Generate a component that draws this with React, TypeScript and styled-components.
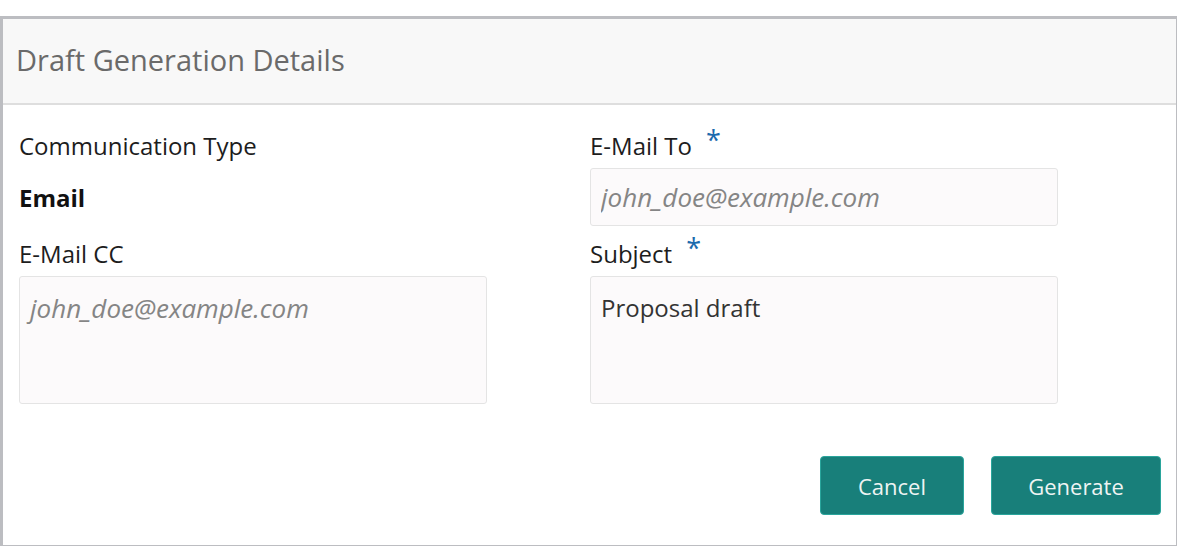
import styled, { createGlobalStyle } from "styled-components"

const Global = createGlobalStyle`
  html, body {
    margin: 0;
    padding: 0;
    background: #fff;
  }
  body {
    font-family: "Open Sans", "Noto Sans", sans-serif;
    color: #1d1d1d;
  }
`

const Page = styled.div`
  padding-top: 16px;
  width: 1178px;
  box-sizing: border-box;
`

const Panel = styled.section`
  box-sizing: border-box;
  width: 1177px;
  height: 530px;
  border-top: 3px solid #bcbdc1;
  border-left: 3px solid #bcbdc1;
  border-right: 1px solid #bcbdc1;
  border-bottom: 1px solid #bcbdc1;
  display: flex;
  flex-direction: column;
`

const Header = styled.header`
  height: 86px;
  box-sizing: border-box;
  background: #f8f8f8;
  border-bottom: 2px solid #dedede;
  display: flex;
  align-items: center;
  padding: 0 0 4px 13px;
`

const Title = styled.h2`
  margin: 0;
  font-size: 29px;
  font-weight: 400;
  color: #6a6a6a;
`

const Body = styled.div`
  padding: 26px 15px 0 16px;
  display: grid;
  grid-template-columns: 468px 468px;
  column-gap: 103px;
  row-gap: 13px;
`

const Field = styled.div`
  display: flex;
  flex-direction: column;
`

const Label = styled.label`
  font-size: 24px;
  line-height: 30px;
  height: 30px;
  margin-bottom: 7px;
  color: #1d1d1d;
`

const Required = styled.span`
  color: #1b6aad;
  font-size: 27px;
  line-height: 0;
  margin-left: 14px;
  position: relative;
  top: -5px;
`

const Value = styled.div`
  height: 58px;
  display: flex;
  align-items: center;
  font-size: 24px;
  font-weight: 700;
  color: #111;
`

const Input = styled.input`
  box-sizing: border-box;
  height: 58px;
  width: 100%;
  border: 1px solid #e4e4e4;
  border-radius: 3px;
  background: #fcfafb;
  padding: 0 10px;
  font-family: inherit;
  font-size: 24px;
  color: #333;
  outline: none;

  &::placeholder {
    font-style: italic;
    font-size: 26px;
    color: #858585;
  }
`

const TextArea = styled.textarea`
  box-sizing: border-box;
  height: 128px;
  width: 100%;
  resize: none;
  border: 1px solid #e4e4e4;
  border-radius: 3px;
  background: #fcfafb;
  padding: 16px 10px;
  font-family: inherit;
  font-size: 24px;
  line-height: 30px;
  color: #333;
  outline: none;

  &::placeholder {
    font-style: italic;
    font-size: 26px;
    color: #858585;
  }
`

const Footer = styled.div`
  display: flex;
  justify-content: flex-end;
  gap: 27px;
  padding: 52px 15px 0 0;
`

const Button = styled.button<{ $w: number }>`
  width: ${p => p.$w}px;
  height: 59px;
  box-sizing: border-box;
  border: 1px solid #2aa59c;
  border-radius: 4px;
  background: #187f7a;
  color: #eef4f3;
  font-family: inherit;
  font-size: 22px;
  cursor: pointer;
`

export default function App() {
  return <Page>
    <Global />
    <Panel>
      <Header>
        <Title>Draft Generation Details</Title>
      </Header>
      <Body>
        <Field>
          <Label>Communication Type</Label>
          <Value>Email</Value>
        </Field>
        <Field>
          <Label>E-Mail To<Required>*</Required></Label>
          <Input placeholder="john_doe@example.com" />
        </Field>
        <Field>
          <Label>E-Mail CC</Label>
          <TextArea placeholder="john_doe@example.com" />
        </Field>
        <Field>
          <Label>Subject<Required>*</Required></Label>
          <TextArea defaultValue="Proposal draft" />
        </Field>
      </Body>
      <Footer>
        <Button $w={144}>Cancel</Button>
        <Button $w={170}>Generate</Button>
      </Footer>
    </Panel>
  </Page>
}
